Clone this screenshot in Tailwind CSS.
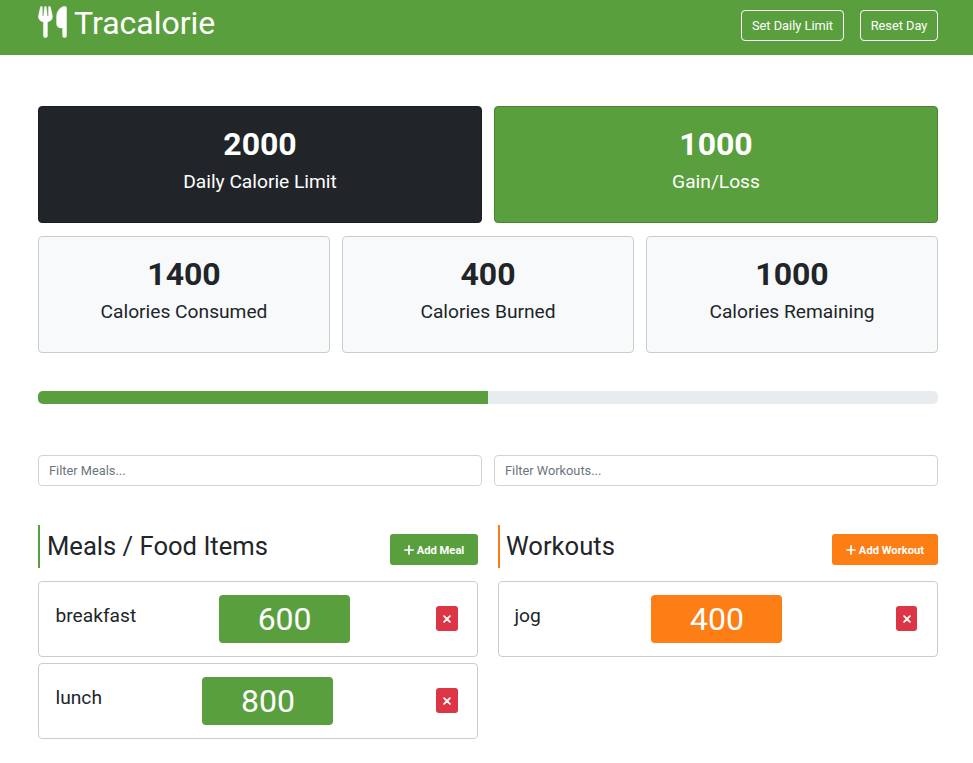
<!DOCTYPE html>
<html lang="en">
<head>
<meta charset="utf-8">
<title>Tracalorie</title>
<script src="https://cdn.jsdelivr.net/npm/@tailwindcss/browser@4"></script>
</head>
<body class="bg-white font-[Roboto,sans-serif] text-[#212529]">
<svg class="hidden">
<symbol id="plus" viewBox="0 0 10 10"><path d="M5 .9V9.100M.9 5H9.100" fill="none" stroke="currentColor" stroke-width="1.700" stroke-linecap="round"/></symbol>
<symbol id="x" viewBox="0 0 8 8"><path d="M1.100 1.100L6.900 6.900M6.900 1.100L1.100 6.900" fill="none" stroke="currentColor" stroke-width="1.800" stroke-linecap="round"/></symbol>
</svg>
<header class="h-[55px] bg-[#5a9f3e] pl-[38px] pr-[35px] flex justify-between text-white">
<div class="flex items-start">
<svg class="w-[29px] h-[32px] mt-[6px]" viewBox="-6 -4 460 520" preserveAspectRatio="none" fill="currentColor" stroke="currentColor" stroke-width="6"><path d="M416 0c-16 0-128 32-128 176v112c0 35.300 28.700 64 64 64h32v128c0 17.700 14.300 32 32 32s32-14.300 32-32V32c0-17.700-14.300-32-32-32zM64 16C64 7.800 57.900 1 49.700.100S34.200 4.600 32.400 12.500L2.100 148.800C.700 155.100 0 161.500 0 167.900c0 45.900 35.100 83.600 80 87.700V480c0 17.700 14.300 32 32 32s32-14.300 32-32V255.600c44.900-4.100 80-41.800 80-87.700 0-6.400-.7-12.800-2.100-19.100L191.600 12.500c-1.800-8-9.300-13.300-17.400-12.400S160 7.800 160 16v134.200c0 5.400-4.400 9.800-9.800 9.800-5.100 0-9.300-3.900-9.800-9L127.900 14.600C127.200 6.300 120.300 0 112 0s-15.200 6.300-15.900 14.600L83.700 151c-.5 5.100-4.700 9-9.800 9-5.400 0-9.800-4.400-9.800-9.800V16z"/></svg>
<h1 class="ml-[7px] mt-[3px] text-[32px] leading-[40px]">Tracalorie</h1>
</div>
<div class="flex gap-4 pt-[10px] text-[12.8px]">
<button class="h-[31px] w-[103px] rounded border border-white">Set Daily Limit</button>
<button class="h-[31px] w-[78px] rounded border border-white">Reset Day</button>
</div>
</header>
<main class="pl-[38px] pr-[35px] pt-[51px]">
<section class="grid grid-cols-2 gap-3 text-center text-white">
<div class="h-[117px] rounded border border-[#1b1e21] bg-[#212529] pt-[17px]"><p class="text-[32px] font-bold leading-[40px]">2000</p><p class="mt-[5px] text-[19.2px] leading-[25px]">Daily Calorie Limit</p></div>
<div class="h-[117px] rounded border border-[#4a8233] bg-[#5a9f3e] pt-[17px]"><p class="text-[32px] font-bold leading-[40px]">1000</p><p class="mt-[5px] text-[19.2px] leading-[25px]">Gain/Loss</p></div>
</section>
<section class="mt-[13px] grid grid-cols-3 gap-3 text-center">
<div class="h-[117px] rounded border border-[#cbcccd] bg-[#f8f9fb] pt-[17px]"><p class="text-[32px] font-bold leading-[40px]">1400</p><p class="mt-[5px] text-[19.2px] leading-[25px]">Calories Consumed</p></div>
<div class="h-[117px] rounded border border-[#cbcccd] bg-[#f8f9fb] pt-[17px]"><p class="text-[32px] font-bold leading-[40px]">400</p><p class="mt-[5px] text-[19.2px] leading-[25px]">Calories Burned</p></div>
<div class="h-[117px] rounded border border-[#cbcccd] bg-[#f8f9fb] pt-[17px]"><p class="text-[32px] font-bold leading-[40px]">1000</p><p class="mt-[5px] text-[19.2px] leading-[25px]">Calories Remaining</p></div>
</section>
<div class="mt-[38px] h-[13px] overflow-hidden rounded-[5px] bg-[#e9ecef]"><div class="h-full w-1/2 bg-[#5a9f3e]"></div></div>
<section class="mt-[51px] grid grid-cols-2 gap-3">
<input class="h-[31px] rounded border border-[#ced4da] px-[10px] text-[12.8px] placeholder:text-[#6c757d]" placeholder="Filter Meals...">
<input class="h-[31px] rounded border border-[#ced4da] px-[10px] text-[12.8px] placeholder:text-[#6c757d]" placeholder="Filter Workouts...">
</section>
<section class="mt-[39px] grid grid-cols-2 gap-5">
<div>
<div class="flex h-[43px] justify-between border-l-2 border-[#5a9f3e] pl-[7px]"><h2 class="pt-[5px] text-[25.6px] leading-[32px]">Meals / Food Items</h2><button class="mt-[9px] flex h-[31px] w-[88px] items-center justify-center gap-[3px] rounded-[3px] bg-[#5a9f3e] text-[11.2px] font-bold text-white"><svg class="h-[10px] w-[10px]"><use href="#plus"/></svg><span class="pt-[3px] leading-[16px]">Add Meal</span></button></div>
<div class="mt-[13px] flex h-[76px] justify-between rounded border border-[#cbcccd] pl-[16.500px] pr-[19px]"><h4 class="pt-[21px] text-[19.2px] leading-[25px]">breakfast</h4><div class="mt-[13px] mr-[3px] h-[48px] w-[131px] rounded bg-[#5a9f3e] text-center text-[32px] leading-[48px] text-white">600</div><button class="mt-[24px] flex h-[25px] w-[22px] items-center justify-center rounded-[3px] bg-[#dc3545] text-white"><svg class="h-[8px] w-[8px]"><use href="#x"/></svg></button></div>
<div class="mt-[6px] flex h-[76px] justify-between rounded border border-[#cbcccd] pl-[16.500px] pr-[19px]"><h4 class="pt-[21px] text-[19.2px] leading-[25px]">lunch</h4><div class="mt-[13px] mr-[2px] h-[48px] w-[131px] rounded bg-[#5a9f3e] text-center text-[32px] leading-[48px] text-white">800</div><button class="mt-[24px] flex h-[25px] w-[22px] items-center justify-center rounded-[3px] bg-[#dc3545] text-white"><svg class="h-[8px] w-[8px]"><use href="#x"/></svg></button></div>
</div>
<div>
<div class="flex h-[43px] justify-between border-l-2 border-[#fd7e14] pl-[6px]"><h2 class="pt-[5px] text-[25.6px] leading-[32px]">Workouts</h2><button class="mt-[9px] flex h-[31px] w-[106px] items-center justify-center gap-[3px] rounded-[3px] bg-[#fd7e14] text-[11.2px] font-bold text-white"><svg class="h-[10px] w-[10px]"><use href="#plus"/></svg><span class="pt-[3px] leading-[16px]">Add Workout</span></button></div>
<div class="mt-[13px] flex h-[76px] justify-between rounded border border-[#cbcccd] pl-[15.500px] pr-[20px]"><h4 class="pt-[21px] text-[19.2px] leading-[25px]">jog</h4><div class="mt-[13px] mr-[3px] h-[48px] w-[131px] rounded bg-[#fd7e14] text-center text-[32px] leading-[48px] text-white">400</div><button class="mt-[24px] flex h-[25px] w-[21px] items-center justify-center rounded-[3px] bg-[#dc3545] text-white"><svg class="h-[8px] w-[8px]"><use href="#x"/></svg></button></div>
</div>
</section>
</main>
</body>
</html>
